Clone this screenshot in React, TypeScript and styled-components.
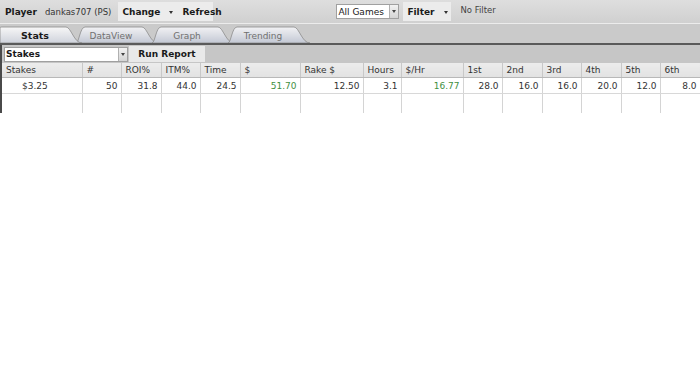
import * as React from "react";
import styled, { createGlobalStyle } from "styled-components";

const GlobalStyle = createGlobalStyle`
    html, body {
        margin: 0;
        padding: 0;
        background: #ffffff;
        font-family: "DejaVu Sans", Verdana, sans-serif;
        font-size: 9px;
        color: #222;
    }
`;

const green = "#3f8f3f";

const Page = styled.div`
    width: 700px;
    display: flex;
    flex-direction: column;
`;

const TopBar = styled.div`
    height: 23px;
    display: flex;
    align-items: center;
    background: linear-gradient(#dedede, #d0d0d0);
    border-bottom: 1px solid #ececec;
    padding-left: 5px;
`;

const PlayerLabel = styled.span`
    font-weight: bold;
    font-size: 9px;
    color: #1a1a1a;
`;

const PlayerName = styled.span`
    margin-left: 8px;
    color: #333;
    font-size: 8.5px;
`;

const ButtonGroup = styled.div<{ left: number; width: number }>`
    margin-left: ${p => p.left}px;
    width: ${p => p.width}px;
    height: 19px;
    box-sizing: border-box;
    background: #ececec;
    display: flex;
    align-items: center;
    padding-left: 4px;
    gap: 4px;
`;

const BoldBtn = styled.span`
    font-weight: bold;
    color: #1a1a1a;
`;

const Caret = styled.span<{ gap?: number }>`
    display: inline-block;
    width: 0;
    height: 0;
    margin: 1px ${p => p.gap ?? 8}px 0 ${p => p.gap ?? 8}px;
    border-left: 2.5px solid transparent;
    border-right: 2.5px solid transparent;
    border-top: 3px solid #333;
`;

const Select = styled.div<{ left: number; width: number; bold?: boolean }>`
    margin-left: ${p => p.left}px;
    width: ${p => p.width}px;
    height: 15px;
    box-sizing: border-box;
    background: #fff;
    border: 1px solid #a0a0a0;
    display: flex;
    align-items: center;
    justify-content: space-between;
    padding-left: 1px;
    font-weight: ${p => (p.bold ? "bold" : "normal")};
    color: #1a1a1a;
`;

const SelectArrow = styled.span`
    width: 9px;
    height: 13px;
    box-sizing: border-box;
    border-left: 1px solid #b0b0b0;
    background: linear-gradient(#f2f2f2, #d4d4d4);
    display: flex;
    align-items: center;
    justify-content: center;
    &::after {
        content: "";
        border-left: 2px solid transparent;
        border-right: 2px solid transparent;
        border-top: 3px solid #444;
    }
`;

const NoFilter = styled.span`
    margin-left: 9px;
    margin-top: -3px;
    color: #444;
    font-size: 8.5px;
`;

const TabStrip = styled.div`
    height: 17px;
    padding-top: 2px;
    background: #cacaca;
    border-bottom: 2px solid #5a5a5a;
    display: flex;
    align-items: flex-end;
`;

const TabItem = styled.div<{ active?: boolean; first?: boolean }>`
    position: relative;
    width: 82px;
    height: 17px;
    margin-left: ${p => (p.first ? 0 : -6)}px;
    display: flex;
    align-items: center;
    justify-content: center;
    padding-right: 12px;
    box-sizing: border-box;
    font-weight: ${p => (p.active ? "bold" : "normal")};
    font-size: ${p => (p.active ? "9.5px" : "9px")};
    color: ${p => (p.active ? "#1a1a1a" : "#707070")};
    z-index: ${p => (p.active ? 5 : 1)};
`;

const TabShape = styled.svg`
    position: absolute;
    left: 0;
    top: 0;
    width: 100%;
    height: 100%;
    z-index: -1;
`;

const TabLabel = styled.span`
    position: relative;
    margin-top: 2px;
`;

const Panel = styled.div`
    border-left: 2px solid #4a4a4a;
    display: flex;
    flex-direction: column;
`;

const ReportBar = styled.div`
    height: 18px;
    background: #c6c6c6;
    display: flex;
    align-items: center;
    padding-left: 2px;
`;

const RunButton = styled.div`
    margin-left: 1px;
    width: 76px;
    height: 16px;
    background: #e9e9e9;
    display: flex;
    align-items: center;
    justify-content: center;
    font-weight: bold;
    color: #1a1a1a;
`;

const Table = styled.table`
    width: 698px;
    table-layout: fixed;
    border-collapse: collapse;
    font-size: 9px;
`;

const Th = styled.th`
    height: 14px;
    padding: 0 0 0 4px;
    text-align: left;
    font-weight: normal;
    color: #333;
    background: linear-gradient(#ececec, #e2e2e2);
    border-right: 1px solid #c8c8c8;
    border-bottom: 1px solid #b8b8b8;
    white-space: nowrap;
    overflow: hidden;
`;

const Td = styled.td<{ tone?: "green"; indent?: number; rowH: number }>`
    height: ${p => p.rowH}px;
    padding: 0 3px 0 ${p => p.indent ?? 0}px;
    text-align: ${p => (p.indent ? "left" : "right")};
    color: ${p => (p.tone === "green" ? green : "#333")};
    border-right: 1px solid #d4d4d4;
    border-bottom: 1px solid #d8d8d8;
    white-space: nowrap;
    overflow: hidden;
`;

const EmptyTd = styled.td`
    height: 17px;
    border-right: 1px solid #d4d4d4;
`;

const widths = [80, 39, 40, 39, 40, 60, 63, 38, 62, 39, 40, 39, 40, 39, 40];
const headers = ["Stakes", "#", "ROI%", "ITM%", "Time", "$", "Rake $", "Hours", "$/Hr", "1st", "2nd", "3rd", "4th", "5th", "6th"];
const row: { v: string; tone?: "green" }[] = [
    { v: "$3.25" },
    { v: "50" },
    { v: "31.8" },
    { v: "44.0" },
    { v: "24.5" },
    { v: "51.70", tone: "green" },
    { v: "12.50" },
    { v: "3.1" },
    { v: "16.77", tone: "green" },
    { v: "28.0" },
    { v: "16.0" },
    { v: "16.0" },
    { v: "20.0" },
    { v: "12.0" },
    { v: "8.0" },
];

const tabs = ["Stats", "DataView", "Graph", "Trending"];

const Tab = ({ label, index }: { label: string; index: number }) => {
    const active = index === 0;
    const id = `tabgrad${index}`;
    return (
        <TabItem active={active} first={index === 0}>
            <TabShape viewBox="0 0 82 17" preserveAspectRatio="none">
                <defs>
                    <linearGradient id={id} x1="0" y1="0" x2="0" y2="1">
                        <stop offset="0" stopColor={active ? "#f7f7f7" : "#f2f2f4"} />
                        <stop offset="1" stopColor={active ? "#cfd3dc" : "#c3c8d4"} />
                    </linearGradient>
                </defs>
                <path
                    d={index === 0
                        ? "M0,17 L0,2 C0,1 1,1 3,1 L66,1 C71,1 74,17 82,17 Z"
                        : "M0,17 C3,17 4,1 9,1 L66,1 C71,1 74,17 82,17 Z"}
                    fill={`url(#${id})`}
                    stroke="#8c8c8c"
                    strokeWidth="0.8"
                />
            </TabShape>
            <TabLabel>{label}</TabLabel>
        </TabItem>
    );
};

const App = () => {
    return (
        <Page>
            <GlobalStyle />
            <TopBar>
                <PlayerLabel>Player</PlayerLabel>
                <PlayerName>dankas707 (PS)</PlayerName>
                <ButtonGroup left={7} width={95}>
                    <BoldBtn>Change</BoldBtn>
                    <Caret gap={5} />
                    <BoldBtn>Refresh</BoldBtn>
                </ButtonGroup>
                <Select left={123} width={63}>
                    All Games
                    <SelectArrow />
                </Select>
                <ButtonGroup left={4} width={48}>
                    <BoldBtn>Filter</BoldBtn>
                    <Caret gap={5} />
                </ButtonGroup>
                <NoFilter>No Filter</NoFilter>
            </TopBar>
            <TabStrip>
                {tabs.map((t, i) => (
                    <Tab key={t} label={t} index={i} />
                ))}
            </TabStrip>
            <Panel>
                <ReportBar>
                    <Select left={0} width={124} bold>
                        Stakes
                        <SelectArrow />
                    </Select>
                    <RunButton>Run Report</RunButton>
                </ReportBar>
                <Table>
                    <colgroup>
                        {widths.map((w, i) => (
                            <col key={i} style={{ width: w }} />
                        ))}
                    </colgroup>
                    <thead>
                        <tr>
                            {headers.map(h => (
                                <Th key={h}>{h}</Th>
                            ))}
                        </tr>
                    </thead>
                    <tbody>
                        <tr>
                            {row.map((c, i) => (
                                <Td key={i} rowH={15} tone={c.tone} indent={i === 0 ? 20 : undefined}>
                                    {c.v}
                                </Td>
                            ))}
                        </tr>
                        <tr>
                            {widths.map((_, i) => (
                                <EmptyTd key={i} />
                            ))}
                        </tr>
                    </tbody>
                </Table>
            </Panel>
        </Page>
    );
};

export default App;
